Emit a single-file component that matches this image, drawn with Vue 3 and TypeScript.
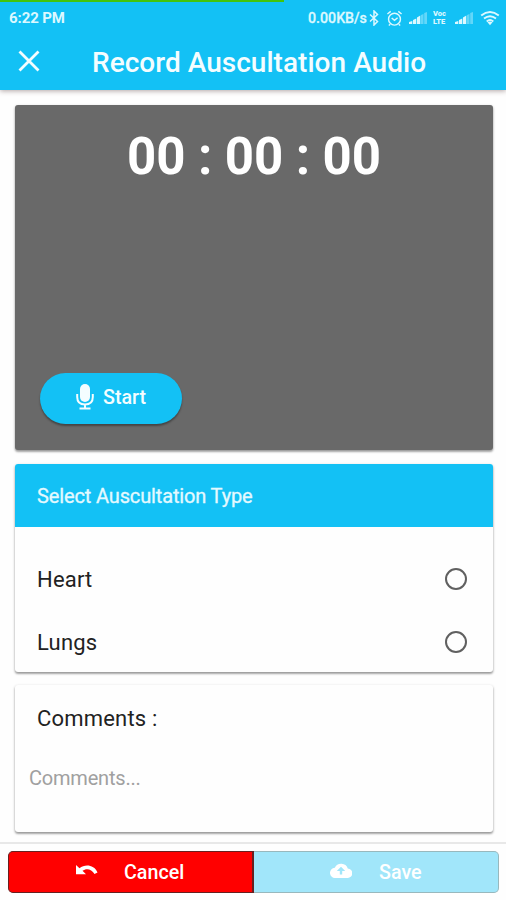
<script setup lang="ts">
import { ref } from 'vue'

const types: string[] = ['Heart', 'Lungs']
const selected = ref<string>('')
const comment = ref<string>('')
const progress = 56.2
</script>

<template>
  <div class="screen">
    <header class="top">
      <div class="progress" :style="{ width: progress + '%' }"></div>
      <div class="status">
        <span class="clock">6:22 PM</span>
        <span class="rate">0.00KB/s</span>
        <svg class="bt" viewBox="0 0 10 16"><path d="M1 4.5 8.5 11.5 5 15V1L8.5 4.5 1 11.5" /></svg>
        <svg class="alarm" viewBox="0 0 18 18">
          <circle cx="9" cy="9.7" r="6.3" /><path d="M6 8.5 9 11l3.3-2.8M1.5 4.3 5 1.5M16.5 4.3 13 1.5M4.5 15l-1.5 1.5M13.5 15l1.5 1.5" />
        </svg>
        <svg class="signal" viewBox="0 0 18 14">
          <path d="M0 13V11L3.300 10V13ZM4 13V9L7.300 7.500V13ZM8 13V6.500L11.300 4.500V13Z" />
          <path class="faint" d="M12 13V4L14.500 3V13ZM15.200 13V2L18 1V13Z" />
        </svg>
        <span class="volte"><span>Voc</span><span>LTE</span></span>
        <svg class="signal second" viewBox="0 0 18 14">
          <path d="M0 13V11L3.300 10V13ZM4 13V9L7.300 7.500V13ZM8 13V6.500L11.300 4.500V13Z" />
          <path class="faint" d="M12 13V4L14.500 3V13ZM15.200 13V2L18 1V13Z" />
        </svg>
        <svg class="wifi" viewBox="0 0 20 16">
          <path d="M1.2 5.5Q10-1.5 18.8 5.5M4 8.600Q10 3.800 16 8.600M6.700 11.400Q10 8.800 13.300 11.400" /><path class="dot" d="M7.500 12.300Q10 10.700 12.500 12.300L10 15.300Z" />
        </svg>
      </div>
      <div class="bar">
        <svg class="close" viewBox="0 0 22 22"><path d="M1.500 1.500 20.500 20.500M20.500 1.500 1.500 20.500" /></svg>
        <h1>Record Auscultation Audio</h1>
      </div>
    </header>

    <main>
      <section class="card recorder">
        <div class="timer">00 : 00 : 00</div>
        <button class="start">
          <svg viewBox="0 0 18 26">
            <rect x="4" y="0" width="10" height="18" rx="5" />
            <path class="line" d="M1.200 10V13Q1.200 20.500 9 20.500T16.800 13V10M9 20.500V24.500M3.500 24.500H14.500" />
          </svg>
          <span>Start</span>
        </button>
      </section>

      <section class="card types">
        <h2>Select Auscultation Type</h2>
        <label v-for="t in types" :key="t" class="row">
          <span>{{ t }}</span>
          <input v-model="selected" type="radio" name="type" :value="t" />
        </label>
      </section>

      <section class="card comments">
        <h3>Comments :</h3>
        <textarea v-model="comment" placeholder="Comments..."></textarea>
      </section>
    </main>

    <footer>
      <button class="cancel">
        <svg class="undo" viewBox="0 0 22 11"><path d="M0 0 3.500 3.200C9-1 18-.5 21.500 7.500L18.500 9C15.500 3.500 10 3 6.500 5.800L10 9.200H0Z" /></svg>
        <span>Cancel</span>
      </button>
      <button class="save">
        <svg class="cloud" viewBox="0 0 22 15">
          <path d="M17.800 5.500A7 7 0 0 0 4.800 4.700 5.100 5.100 0 0 0 5.500 15H17.300A4.700 4.700 0 0 0 17.800 5.500Z" />
          <path class="arrow" d="M11 3.800 6.800 8H9.800V11.500H12.200V8H15.200Z" />
        </svg>
        <span>Save</span>
      </button>
    </footer>
  </div>
</template>

<style>
body { margin: 0; background: #fefefe; }
</style>

<style scoped>
* { box-sizing: border-box; }
.screen { width: 506px; height: 900px; display: flex; flex-direction: column; overflow: hidden; font-family: Roboto, "Liberation Sans", sans-serif; background: #fefefe; }
svg { display: block; flex: none; }
button { font: inherit; cursor: pointer; padding: 0; }
.top { height: 90px; flex: none; background: #13c1f5; color: #f4fdff; box-shadow: 0 1px 5px rgba(60, 30, 30, .4); }
.progress { height: 2px; background: #43c40c; }
.status { height: 32px; display: flex; align-items: center; padding-left: 9px; color: #dcf8ff; }
.clock { width: 299px; font-size: 15px; font-weight: 700; letter-spacing: -.1px; }
.rate { width: 61px; font-size: 14.200px; font-weight: 500; white-space: nowrap; -webkit-text-stroke: .3px; }
.status svg { fill: none; stroke: #dcf8ff; stroke-width: 1.500; }
.status .bt { width: 10px; height: 16px; }
.status .alarm { width: 17px; height: 17px; margin-left: 7px; }
.status .signal { width: 18px; height: 14px; margin-left: 6px; fill: #dcf8ff; stroke: none; }
.status .signal.second { margin-left: 6px; }
.faint { opacity: .4; }
.volte { width: 16px; margin-left: 6px; display: flex; flex-direction: column; font-size: 7.500px; line-height: 8px; font-weight: 900; }
.volte span { height: 8px; overflow: hidden; }
.status .wifi { width: 20px; height: 16px; margin-left: 7px; stroke-width: 1.900; }
.wifi .dot { fill: #dcf8ff; stroke: none; }
.bar { height: 56px; display: flex; align-items: center; padding: 1px 0 0 18px; }
.close { width: 22px; height: 22px; fill: none; stroke: #f4fdff; stroke-width: 2.800; margin-bottom: 3px; }
h1 { margin: 0 0 0 52px; font-size: 28px; line-height: 34px; font-weight: 500; white-space: nowrap; letter-spacing: .03px; }
main { padding: 15px 13px 0 15px; display: flex; flex-direction: column; }
.card { border-radius: 3px; background: #fefefe; box-shadow: 0 2px 2px rgba(0, 0, 0, .26), 0 1px 3px rgba(0, 0, 0, .24); }
.recorder { height: 345px; background: #696969; display: flex; flex-direction: column; padding: 22px 25px 0; }
.timer { height: 60px; line-height: 60px; text-align: center; color: #fff; font-size: 51px; font-weight: 700; white-space: nowrap; letter-spacing: -.1px; }
.start { margin-top: 186px; width: 142px; height: 51px; border: 0; border-radius: 26px; background: #13c1f5; color: #f4fdff; display: flex; align-items: center; padding: 0 0 3px 36px; box-shadow: 0 2px 2px rgba(0, 0, 0, .35); font-size: 19.700px; font-weight: 500; }
.start svg { width: 18px; height: 26px; margin-right: 9px; fill: #f4fdff; }
.start .line { fill: none; stroke: #f4fdff; stroke-width: 2; }
.types { height: 208px; margin-top: 14px; }
h2 { margin: 0; height: 63px; padding: 1px 0 0 22px; border-radius: 3px 3px 0 0; background: #13c1f5; color: #e4f9ff; font-size: 20px; line-height: 63px; font-weight: 400; letter-spacing: -.14px; -webkit-text-stroke: .3px; }
.row { height: 63px; display: flex; align-items: center; justify-content: space-between; padding: 0 26px 0 22px; font-size: 22px; letter-spacing: .2px; color: #222; }
.row span { padding-top: 1px; }
h2 + .row { margin-top: 20px; }
input[type="radio"] { appearance: none; width: 22px; height: 22px; margin: 0; border: 2px solid #606060; border-radius: 50%; background: transparent; }
.comments { height: 147px; margin-top: 13px; padding-top: 19px; }
h3 { margin: 0 0 0 22px; font-size: 22px; line-height: 30px; font-weight: 400; letter-spacing: .2px; color: #222; }
textarea { display: block; width: 450px; height: 60px; margin: 29px 0 0 14px; padding: 0; border: 0; outline: 0; resize: none; background: transparent; font: 400 20px/30px Roboto, "Liberation Sans", sans-serif; letter-spacing: -.2px; }
textarea::placeholder { color: #a0a0a0; opacity: 1; }
footer { margin-top: auto; height: 58px; flex: none; display: flex; padding: 7px 7px 7px 8px; border-top: 2px solid #e8e8e8; }
footer button { height: 42px; display: flex; align-items: center; color: #fff; font-size: 19.700px; font-weight: 500; }
.cancel { width: 246px; background: #f00; border: 1px solid #672020; border-right-width: 2px; border-radius: 5px 0 0 5px; padding-left: 67px; }
.save { width: 245px; background: #a1e6fa; border: 1px solid #98b8bd; border-left: 0; border-radius: 0 5px 5px 0; padding-left: 76px; }
.undo { width: 22px; height: 11px; fill: #fff; margin: 0 26px 3px 0; }
.cloud { width: 22px; height: 15px; fill: #fff; margin: 0 27px 4px 0; }
.cloud .arrow { fill: #a1e6fa; }
</style>
